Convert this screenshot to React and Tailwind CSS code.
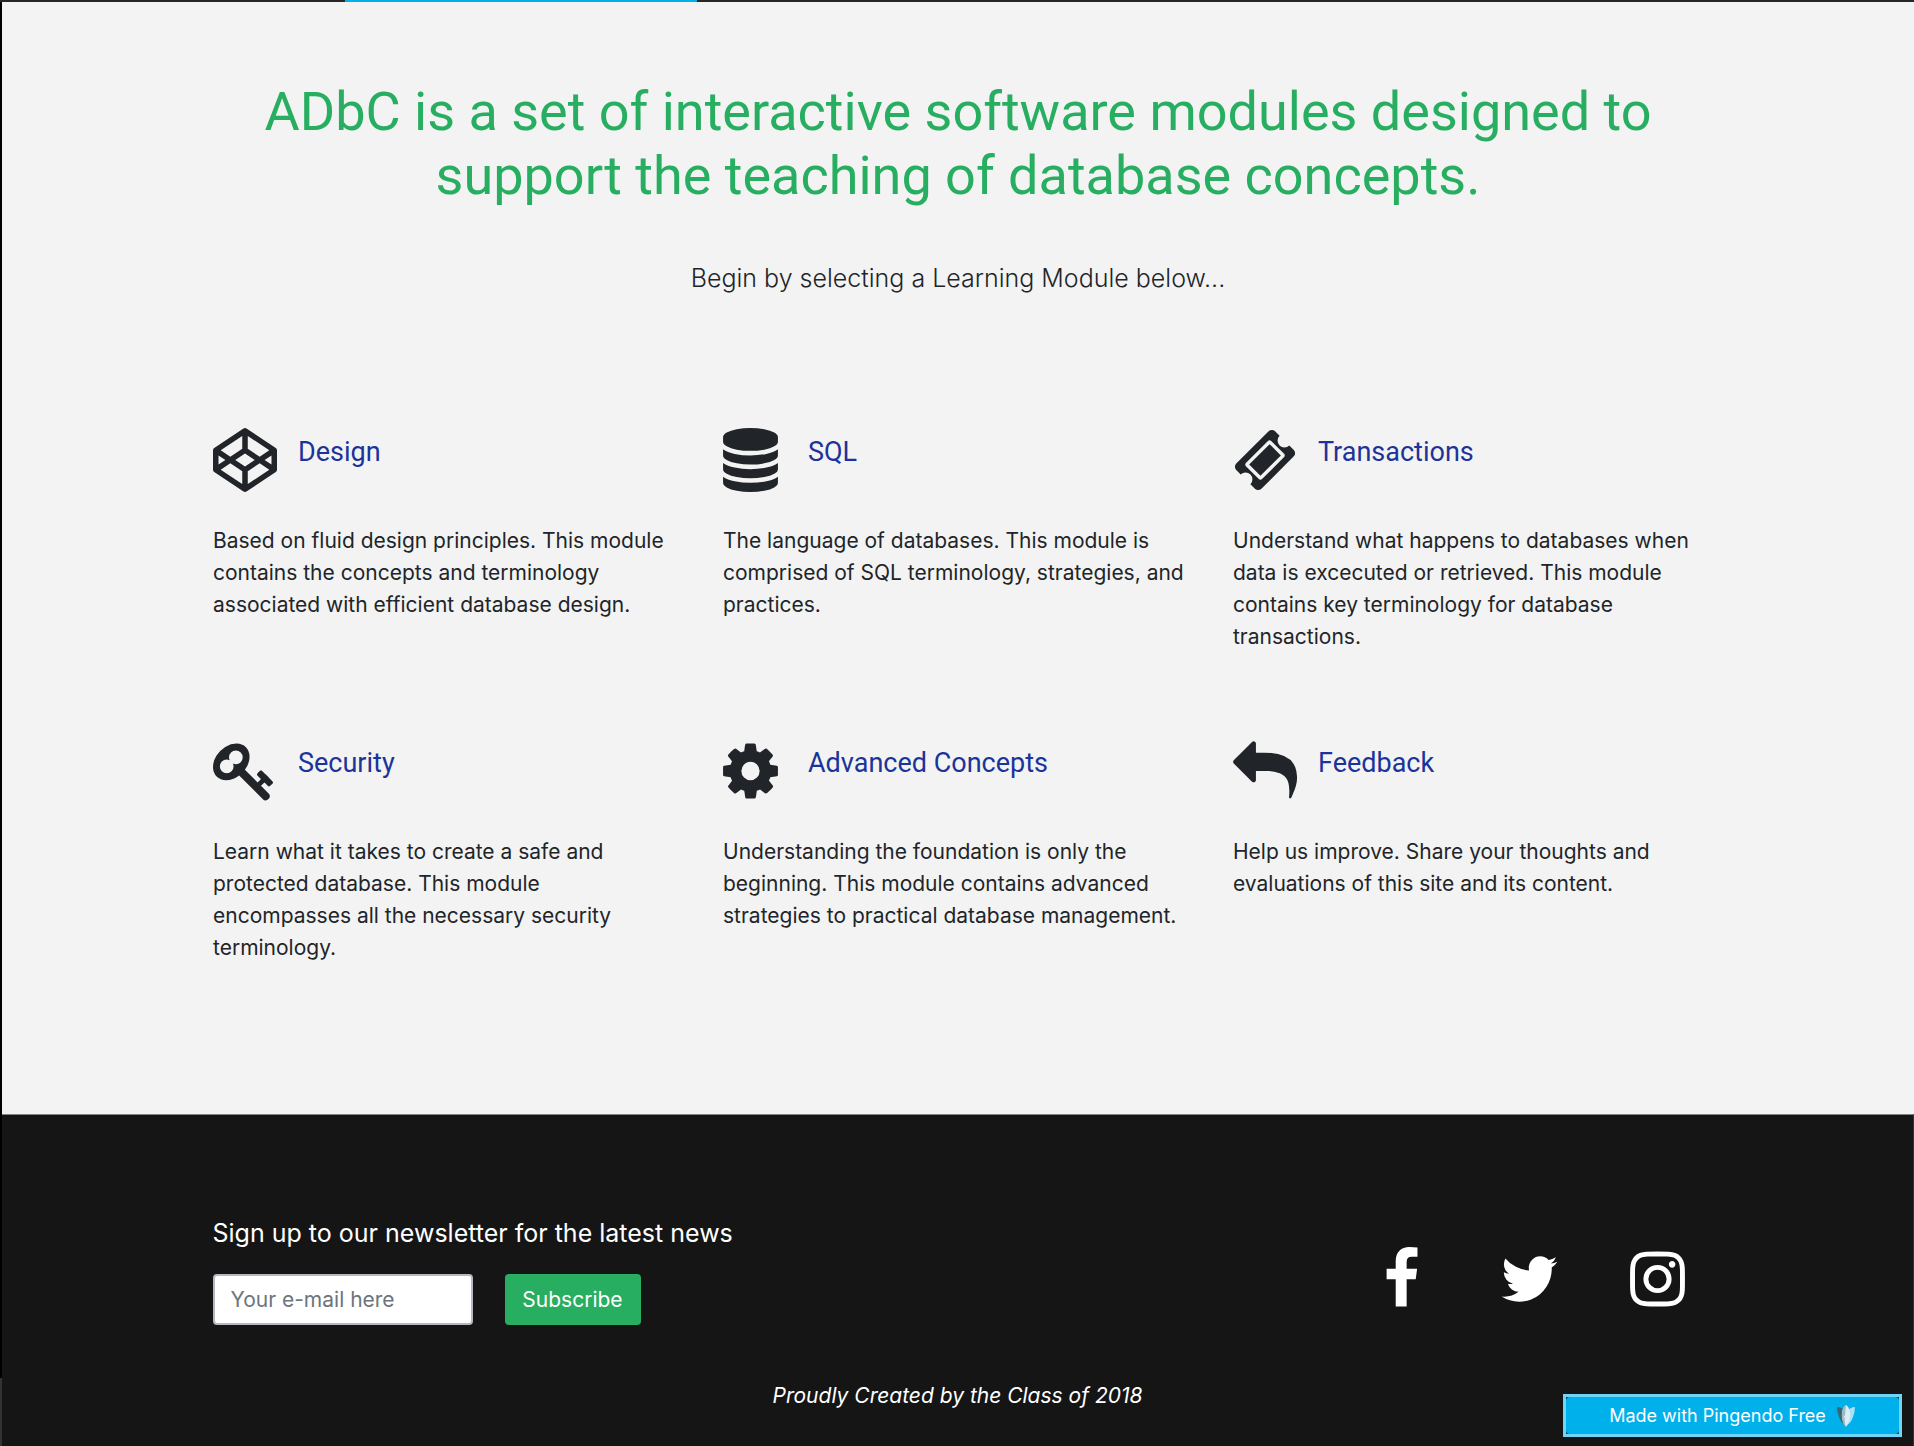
import React from "react";

const ICONS = {
  codepen: {
    box: "0 0 1792 1792",
    size: "h-16 w-16",
    d: "M216 1169l603 402v-359l-334-223zm-62-144l193-129-193-129v258zm819 546l603-402-269-180-334 223v359zm-77-493l272-182-272-182-272 182zm-411-275l334-223v-359l-603 402zm960 93l193 129v-258zm-138-93l269-180-603-402v359zm485-180v546q0 41-34 64l-819 546q-21 13-43 13t-43-13l-819-546q-34-23-34-64v-546q0-41 34-64l819-546q21-13 43-13t43 13l819 546q34 23 34 64z",
  },
  database: {
    box: "128 0 1536 1792",
    size: "h-16 w-[55px]",
    d: "M896 768q237 0 443-43t325-127v170q0 69-103 128t-280 93.5-385 34.5-385-34.5-280-93.5-103-128v-170q119 84 325 127t443 43zm0 768q237 0 443-43t325-127v170q0 69-103 128t-280 93.5-385 34.5-385-34.5-280-93.5-103-128v-170q119 84 325 127t443 43zm0-384q237 0 443-43t325-127v170q0 69-103 128t-280 93.5-385 34.5-385-34.5-280-93.5-103-128v-170q119 84 325 127t443 43zm0-1152q208 0 385 34.5t280 93.5 103 128v128q0 69-103 128t-280 93.5-385 34.5-385-34.5-280-93.5-103-128v-128q0-69 103-128t280-93.5 385-34.5z",
  },
  ticket: {
    box: "0 0 1792 1792",
    size: "h-16 w-16",
    d: "M1024 452l316 316-572 572-316-316zm-211 979l618-618q19-19 19-45t-19-45l-362-362q-18-18-45-18t-45 18l-618 618q-19 19-19 45t19 45l362 362q18 18 45 18t45-18zm889-637l-907 908q-37 37-90.5 37t-90.5-37l-126-126q56-56 56-136t-56-136-136-56-136 56l-125-126q-37-37-37-90.5t37-90.5l907-906q37-37 90.5-37t90.5 37l125 125q-56 56-56 136t56 136 136 56 136-56l126 125q37 37 37 90.5t-37 90.5z",
  },
  key: {
    box: "0 0 1792 1792",
    size: "h-16 w-16 overflow-visible",
    d: "M832 512q0-80-56-136t-136-56-136 56-56 136q0 42 19 83-41-19-83-19-80 0-136 56t-56 136 56 136 136 56 136-56 56-136q0-42-19-83 41 19 83 19 80 0 136-56t56-136zm851 704q0 17-49 66t-66 49q-9 0-28.5-16t-36.5-33-38.5-40-24.5-26l-96 96 220 220q28 28 28 68 0 42-39 81t-81 39q-40 0-68-28l-671-671q-176 131-365 131-163 0-265.5-102.5t-102.5-265.5q0-160 95-313t248-248 313-95q163 0 265.5 102.5t102.5 265.5q0 189-131 365l355 355 96-96q-3-3-26-24.5t-40-38.5-33-36.5-16-28.5q0-17 49-66t66-49q13 0 23 10 6 6 46 44.5t82 79.5 86.5 86 73 78 28.5 41z",
  },
  cog: {
    box: "128 0 1536 1792",
    size: "h-16 w-[55px]",
    d: "M1152 896q0-106-75-181t-181-75-181 75-75 181 75 181 181 75 181-75 75-181zm512-109v222q0 12-8 23t-20 13l-185 28q-19 54-39 91 35 50 107 138 10 12 10 25t-9 23q-27 37-99 108t-94 71q-12 0-26-9l-138-108q-44 23-91 38-16 136-29 186-7 28-36 28h-222q-14 0-24.5-8.5t-11.5-21.5l-28-184q-49-16-90-37l-141 107q-10 9-25 9-14 0-25-11-126-114-165-168-7-10-7-23 0-12 8-23 15-21 51-66.5t54-70.5q-27-50-41-99l-183-27q-13-2-21-12.5t-8-23.5v-222q0-12 8-23t19-13l186-28q14-46 39-92-40-57-107-138-10-12-10-24 0-10 9-23 26-36 98.5-107.5t94.5-71.5q13 0 26 10l138 107q44-23 91-38 16-136 29-186 7-28 36-28h222q14 0 24.5 8.5t11.5 21.5l28 184q49 16 90 37l142-107q9-9 24-9 13 0 25 10 129 119 165 170 7 8 7 22 0 12-8 23-15 21-51 66.5t-54 70.5q26 50 41 98l183 28q13 2 21 12.5t8 23.5z",
  },
  reply: {
    box: "0 0 1792 1792",
    size: "h-16 w-16",
    d: "M1792 1120q0 166-127 451-3 7-10.5 24t-13.5 30-13 22q-12 17-28 17-15 0-23.5-10t-8.5-25q0-9 2.5-26.5t2.5-23.5q5-68 5-123c0-350-110-562-712-562h-224v256q0 26-19 45t-45 19-45-19l-512-512q-19-19-19-45t19-45l512-512q19-19 45-19t45 19 19 45v256h224q713 0 875 403 53 134 53 333z",
  },
  facebook: {
    box: "384 0 1024 1792",
    size: "h-16 w-[37px]",
    d: "M1343 12v264h-157q-86 0-116 36t-30 108v189h293l-39 296h-254v759h-306v-759h-255v-296h255v-218q0-186 104-288.5t277-102.5q147 0 228 12z",
  },
  twitter: {
    box: "64 0 1664 1792",
    size: "h-16 w-[59px]",
    d: "M1684 408q-67 98-162 167 1 14 1 42 0 130-38 259.5t-115.5 248.5-184.5 210.5-258 146-323 54.5q-271 0-496-145 35 4 78 4 225 0 401-138-105-2-188-64.5t-114-159.5q33 5 61 5 43 0 85-11-112-23-185.5-111.5t-73.5-205.5v-4q68 38 146 41-66-44-105-115t-39-154q0-88 44-163 121 149 294.5 238.5t371.5 99.5q-8-38-8-74 0-134 94.5-228.5t228.5-94.5q140 0 236 102 109-21 205-78-37 115-142 178 93-10 186-50z",
  },
  instagram: {
    box: "128 0 1536 1792",
    size: "h-16 w-[55px]",
    d: "M1152 896q0-106-75-181t-181-75-181 75-75 181 75 181 181 75 181-75 75-181zm138 0q0 164-115 279t-279 115-279-115-115-279 115-279 279-115 279 115 115 279zm108-410q0 38-27 65t-65 27-65-27-27-65 27-65 65-27 65 27 27 65zm-502-220q-7 0-76.5-.5t-105.5 0-96.5 3-103 10-71.5 18.5q-50 20-88 58t-58 88q-11 29-18.5 71.5t-10 103-3 96.5 0 105.5.5 76.5-.5 76.5 0 105.5 3 96.5 10 103 18.5 71.5q20 50 58 88t88 58q29 11 71.5 18.5t103 10 96.5 3 105.5 0 76.5-.5 76.5.5 105.5 0 96.5-3 103-10 71.5-18.5q50-20 88-58t58-88q11-29 18.5-71.5t10-103 3-96.5 0-105.5-.5-76.5.5-76.5 0-105.5-3-96.5-10-103-18.5-71.5q-20-50-58-88t-88-58q-29-11-71.5-18.5t-103-10-96.5-3-105.5 0-76.5.5zm768 630q0 229-5 317-10 208-124 322t-322 124q-88 5-317 5t-317-5q-208-10-322-124t-124-322q-5-88-5-317t5-317q10-208 124-322t322-124q88-5 317-5t317 5q208 10 322 124t124 322q5 88 5 317z",
  },
};

function Icon({ name }) {
  const icon = ICONS[name];
  return (
    <svg viewBox={icon.box} className={icon.size} fill="currentColor" aria-hidden="true">
      <path d={icon.d} />
    </svg>
  );
}

const MODULES = [
  { icon: "codepen", title: "Design", text: "Based on fluid design principles. This module contains the concepts and terminology associated with efficient database design." },
  { icon: "database", title: "SQL", text: "The language of databases. This module is comprised of SQL terminology, strategies, and practices." },
  { icon: "ticket", title: "Transactions", text: "Understand what happens to databases when data is excecuted or retrieved. This module contains key terminology for database transactions." },
  { icon: "key", title: "Security", text: "Learn what it takes to create a safe and protected database. This module encompasses all the necessary security terminology." },
  { icon: "cog", title: "Advanced Concepts", text: "Understanding the foundation is only the beginning. This module contains advanced strategies to practical database management." },
  { icon: "reply", title: "Feedback", text: "Help us improve. Share your thoughts and evaluations of this site and its content." },
];

function Module({ icon, title, text }) {
  return (
    <article className="pr-6 pl-5">
      <div className="grid grid-cols-[85px_1fr]">
        <Icon name={icon} />
        <h2 className="pt-2 font-[Roboto,sans-serif] text-[27px] leading-8 text-[#1c3399]">
          <a href="#">{title}</a>
        </h2>
      </div>
      <p className="mt-[33px] text-[21px] leading-8">{text}</p>
    </article>
  );
}

function Leaf() {
  return (
    <svg viewBox="0 0 20 24" className="h-6 w-5" aria-hidden="true">
      <path d="M1 3Q7 3 9 8L9 20Q5 19 3 13Q1 8 1 3z" fill="#3d6674" />
      <path d="M19 3Q14 3 11 8L10 22Q15 19 17 13Q19 8 19 3z" fill="#a9e0f5" />
      <path d="M10 1Q13 3 14 8Q15 16 10 23Q5 17 6 8Q7 3 10 1z" fill="#d9eef6" />
      <path d="M10 1Q7 3 6 8Q5 17 10 23Q8 16 9 13L7 14L9 11z" fill="#9dbac5" />
    </svg>
  );
}

export default function App() {
  return (
    <div className="relative flex min-h-screen flex-col bg-[#f3f3f3] font-[Inter,sans-serif] text-[#212529]">
      <div className="grid h-[2px] grid-cols-[18%_352px_1fr] bg-[#272727]">
        <span />
        <span className="bg-[#00b0eb]" />
      </div>
      <div className="flex flex-1 flex-col border-l-2 border-black">
        <main className="mx-auto w-full max-w-[1530px] pt-[78px] pb-[150px]">
          <h1 className="mx-auto max-w-[1420px] text-center font-[Roboto,sans-serif] text-[54px] leading-[64px] text-[#28ae60]">
            ADbC is a set of interactive software modules designed to support the teaching of database concepts.
          </h1>
          <p className="mt-[50px] text-center text-[25px] leading-10 font-light">
            Begin by selecting a Learning Module below...
          </p>
          <section className="mt-[130px] grid grid-cols-3 gap-y-[86px]">
            {MODULES.map((m) => (
              <Module key={m.title} {...m} />
            ))}
          </section>
        </main>
        <footer className="flex-1 border-t border-r border-t-[#7f8381] border-r-[#333333] bg-[#151515] text-white">
          <div className="mx-auto flex w-full max-w-[1530px] items-start justify-between pt-[98px]">
            <form className="px-5" onSubmit={(e) => e.preventDefault()}>
              <label htmlFor="email" className="block text-[25px] leading-10">
                Sign up to our newsletter for the latest news
              </label>
              <div className="mt-[21px] flex gap-8">
                <input
                  id="email"
                  type="email"
                  placeholder="Your e-mail here"
                  className="h-[51px] w-[260px] rounded border-2 border-[#b5b8c0] bg-white px-4 text-[21px] text-[#212529] placeholder:text-[#6c757d]"
                />
                <button type="submit" className="h-[51px] w-[136px] rounded bg-[#28ae60] text-[21px]">
                  Subscribe
                </button>
              </div>
            </form>
            <nav className="grid grid-cols-3 pt-[34px] pr-[1px]" aria-label="Social media">
              {["facebook", "twitter", "instagram"].map((name) => (
                <a key={name} href="#" aria-label={name} className="flex w-32 justify-center">
                  <Icon name={name} />
                </a>
              ))}
            </nav>
          </div>
          <p className="mt-[55px] text-center text-[21px] leading-8 italic">Proudly Created by the Class of 2018</p>
        </footer>
      </div>
      <span className="absolute bottom-0 left-0 h-17 w-[2px] bg-[#333333]" />
      <a
        href="#"
        className="absolute right-3 bottom-[9px] flex h-[43px] w-[339px] border-[3px] border-[#6fd4f7] bg-[#23343c] text-[18px] text-white"
      >
        <span className="flex flex-1 items-center justify-center gap-[10px] rounded bg-[#00b0eb]">
          Made with Pingendo Free
          <Leaf />
        </span>
      </a>
    </div>
  );
}
